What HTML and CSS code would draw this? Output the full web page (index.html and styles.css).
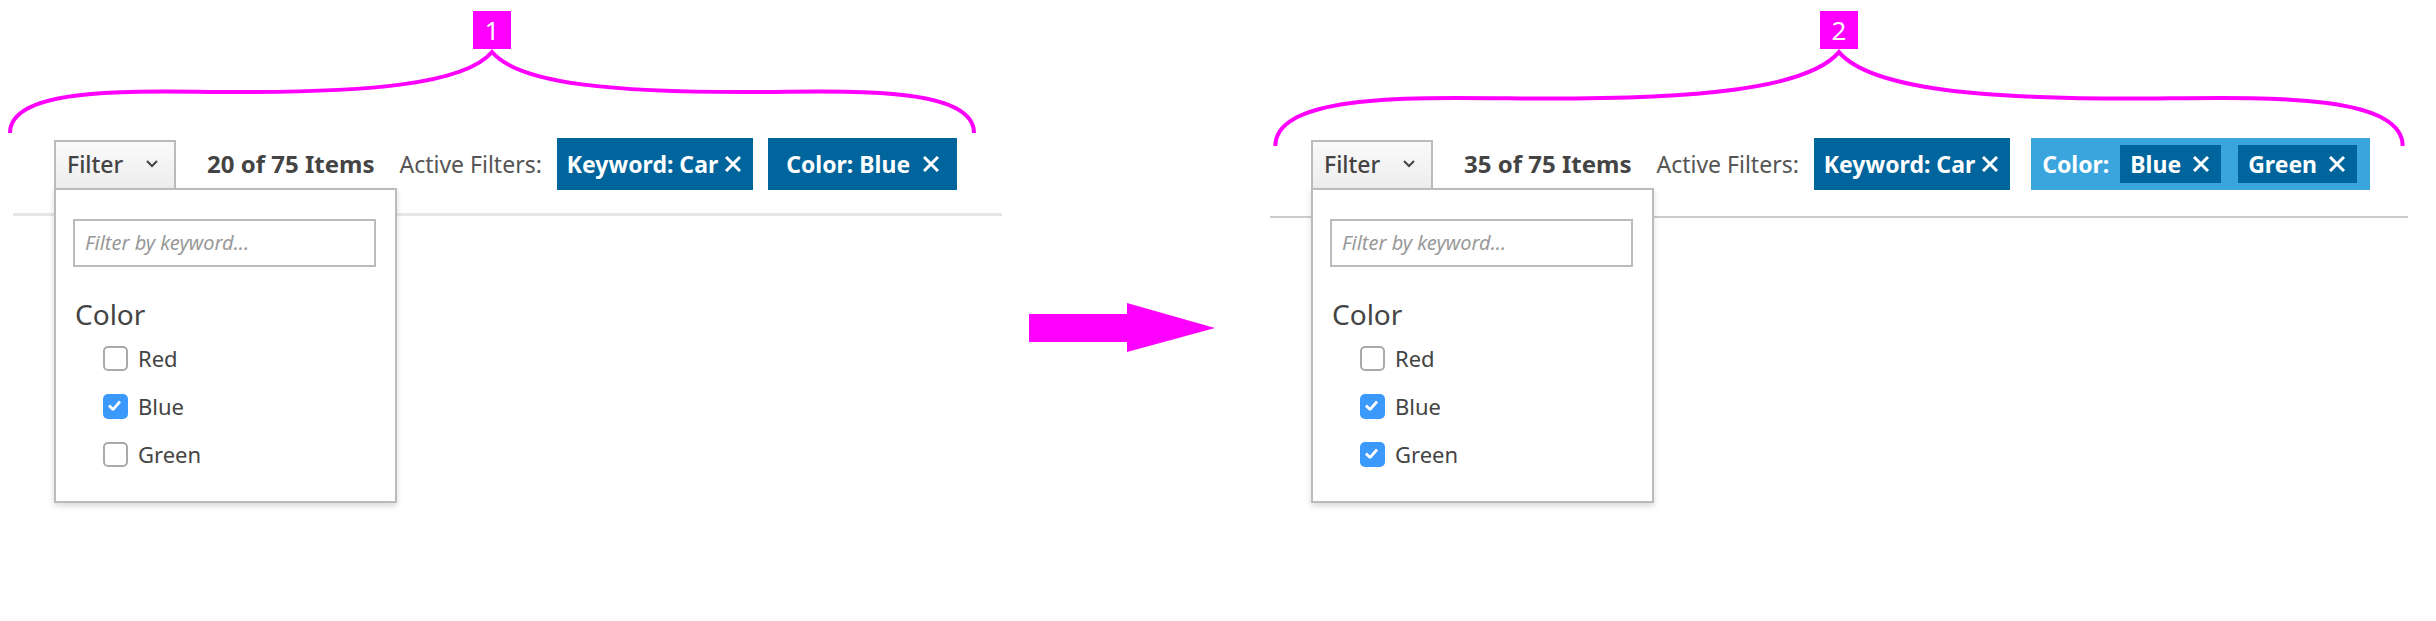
FILE: index.html
```html
<!DOCTYPE html>
<html lang="en">
<head>
<meta charset="utf-8">
<meta name="viewport" content="width=device-width, initial-scale=1">
<title>Filter states</title>
<link rel="stylesheet" href="styles.css">
</head>
<body>
<main class="comparison">
  <section class="scene scene-single" aria-label="State 1">
    <div class="callout">
      <span class="callout-number">1</span>
      <svg class="brace" viewBox="0 0 968 82" preserveAspectRatio="none" aria-hidden="true">
        <path d="M2 82C2 37 117 40 212 41C362 42 457 33 484 1C511 33 606 42 756 41C851 40 966 37 966 82"/>
      </svg>
    </div>
    <div class="toolbar">
      <div class="filter">
        <button class="filter-button" type="button" aria-expanded="true">Filter
          <svg class="chevron" viewBox="0 0 12 8" aria-hidden="true"><path d="M1 1L6 6L11 1"/></svg>
        </button>
        <div class="menu">
          <input class="keyword" type="text" placeholder="Filter by keyword..." aria-label="Filter by keyword">
          <fieldset class="options">
            <legend class="options-title">Color</legend>
            <label class="option"><input class="tick" type="checkbox">Red</label>
            <label class="option"><input class="tick" type="checkbox" checked>Blue</label>
            <label class="option"><input class="tick" type="checkbox">Green</label>
          </fieldset>
        </div>
      </div>
      <strong class="count">20 of 75 Items</strong>
      <span class="active-label">Active Filters:</span>
      <div class="tags">
        <span class="tag">Keyword: Car
          <button class="remove" type="button" aria-label="Remove Keyword: Car"><svg class="cross" viewBox="0 0 16 16" aria-hidden="true"><path d="M1 1L15 15M15 1L1 15"/></svg></button>
        </span>
        <span class="tag tag-wide">Color: Blue
          <button class="remove" type="button" aria-label="Remove Color: Blue"><svg class="cross" viewBox="0 0 16 16" aria-hidden="true"><path d="M1 1L15 15M15 1L1 15"/></svg></button>
        </span>
      </div>
    </div>
  </section>

  <div class="transition">
    <svg class="arrow" viewBox="0 0 186 50" aria-hidden="true"><path d="M0 11H98V0L186 25L98 49V39H0Z"/></svg>
  </div>

  <section class="scene scene-grouped" aria-label="State 2">
    <div class="callout">
      <span class="callout-number">2</span>
      <svg class="brace" viewBox="0 0 968 82" preserveAspectRatio="none" aria-hidden="true">
        <path d="M2 82C2 37 117 40 212 41C362 42 457 33 484 1C511 33 606 42 756 41C851 40 966 37 966 82"/>
      </svg>
    </div>
    <div class="toolbar">
      <div class="filter">
        <button class="filter-button" type="button" aria-expanded="true">Filter
          <svg class="chevron" viewBox="0 0 12 8" aria-hidden="true"><path d="M1 1L6 6L11 1"/></svg>
        </button>
        <div class="menu">
          <input class="keyword" type="text" placeholder="Filter by keyword..." aria-label="Filter by keyword">
          <fieldset class="options">
            <legend class="options-title">Color</legend>
            <label class="option"><input class="tick" type="checkbox">Red</label>
            <label class="option"><input class="tick" type="checkbox" checked>Blue</label>
            <label class="option"><input class="tick" type="checkbox" checked>Green</label>
          </fieldset>
        </div>
      </div>
      <strong class="count">35 of 75 Items</strong>
      <span class="active-label">Active Filters:</span>
      <div class="tags">
        <span class="tag">Keyword: Car
          <button class="remove" type="button" aria-label="Remove Keyword: Car"><svg class="cross" viewBox="0 0 16 16" aria-hidden="true"><path d="M1 1L15 15M15 1L1 15"/></svg></button>
        </span>
        <div class="tag-group">Color:
          <span class="tag tag-small">Blue
            <button class="remove" type="button" aria-label="Remove Blue"><svg class="cross" viewBox="0 0 16 16" aria-hidden="true"><path d="M1 1L15 15M15 1L1 15"/></svg></button>
          </span>
          <span class="tag tag-small">Green
            <button class="remove" type="button" aria-label="Remove Green"><svg class="cross" viewBox="0 0 16 16" aria-hidden="true"><path d="M1 1L15 15M15 1L1 15"/></svg></button>
          </span>
        </div>
      </div>
    </div>
  </section>
</main>
</body>
</html>
```
FILE: styles.css
```css
* {
  box-sizing: border-box;
}

body {
  margin: 0;
  background: #fff;
  color: #444;
  font: 22px/30px "Noto Sans", "Open Sans", sans-serif;
}

button,
input {
  font: inherit;
  color: inherit;
}

.comparison {
  display: grid;
  grid-template-columns: 994fr 268fr 1138fr;
  align-items: start;
  min-height: 100vh;
  padding: 11px 28px 0 8px;
}

/* Numbered callout with its brace */
.callout {
  display: flex;
  flex-direction: column;
  align-items: center;
  gap: 2px;
  height: 127px;
}

.scene-single .callout {
  padding-right: 26px;
}

.scene-grouped .callout {
  padding: 0 3px;
}

.callout-number {
  width: 38px;
  background: #f0f;
  color: #fff;
  font-size: 26px;
  line-height: 38px;
  text-align: center;
}

.brace {
  flex: none;
  width: 100%;
  height: 82px;
  overflow: visible;
  fill: none;
  stroke: #f0f;
  stroke-width: 4px;
}

.brace path {
  vector-effect: non-scaling-stroke;
}

.scene-grouped .brace {
  height: 95px;
}

/* Arrow between the two states */
.transition {
  padding: 292px 55px 0 27px;
}

.arrow {
  display: block;
  width: 100%;
  fill: #f0f;
}

/* Toolbar */
.toolbar {
  display: flex;
  align-items: center;
  padding: 0 0 23px 41px;
  border-bottom: 3px solid #e6e6e6;
  font-size: 23px;
}

.scene-single .toolbar {
  margin-left: 5px;
}

.scene-grouped .toolbar {
  padding-bottom: 26px;
  border-bottom: 2px solid #ccc;
}

.filter {
  position: relative;
  align-self: flex-end;
}

.filter-button {
  display: flex;
  align-items: center;
  justify-content: space-between;
  width: 122px;
  height: 50px;
  padding: 0 16px 3px 11px;
  border: 2px solid #bbb;
  background: linear-gradient(#fafafa, #ededed);
  font-weight: 500;
}

.chevron {
  width: 12px;
  height: 8px;
  fill: none;
  stroke: #444;
  stroke-width: 2px;
}

.count {
  margin-left: 31px;
  font-size: 24px;
}

.active-label {
  margin-left: 25px;
  color: #555;
}

.tags {
  display: flex;
  gap: 15px;
  margin-left: 15px;
}

.scene-grouped .tags {
  gap: 21px;
}

.tag,
.tag-group {
  display: flex;
  align-items: center;
  height: 52px;
  color: #fff;
  font-weight: 700;
}

.tag {
  gap: 7px;
  padding: 0 12px 0 10px;
  background: #00659c;
}

.tag-wide {
  gap: 13px;
  padding: 0 18px;
}

.tag-group {
  gap: 11px;
  padding: 0 13px 0 11px;
  background: #39a5dc;
}

.tag-small {
  gap: 12px;
  height: 38px;
}

.tag-small + .tag-small {
  margin-left: 6px;
}

.remove {
  display: flex;
  padding: 0;
  border: 0;
  background: none;
}

.cross {
  width: 16px;
  height: 16px;
  fill: none;
  stroke: #fff;
  stroke-width: 3px;
}

/* Open filter menu */
.menu {
  position: absolute;
  top: 100%;
  left: 0;
  z-index: 1;
  width: 343px;
  margin-top: -2px;
  padding: 29px 19px 23px 17px;
  border: 2px solid #bbb;
  background: #fff;
  box-shadow: 0 3px 6px rgba(0, 0, 0, 0.15);
  font-size: 22px;
}

.keyword {
  display: block;
  width: 100%;
  height: 48px;
  padding: 0 10px 2px;
  border: 2px solid #bbb;
  background: #fff;
  font-size: 20px;
  font-style: italic;
}

.keyword::placeholder {
  color: #999;
  opacity: 1;
}

.options {
  margin: 27px 0 0;
  padding: 0 0 0 30px;
  border: 0;
}

.options-title {
  margin-left: -28px;
  padding: 0;
  font-size: 28px;
  line-height: 40px;
}

.option {
  display: flex;
  align-items: center;
  gap: 10px;
  height: 48px;
}

.tick {
  flex: none;
  width: 25px;
  height: 25px;
  margin: 0;
  border: 2px solid #aaa;
  border-radius: 5px;
  background: #fff;
  appearance: none;
}

.tick:checked {
  border: 0;
  background: #3b99fc;
}

.tick:checked::before {
  content: "";
  display: block;
  height: 100%;
  background: #fff;
  clip-path: polygon(5px 13px, 7px 11px, 10px 14px, 16px 7px, 18px 9px, 11px 17px, 9px 17px);
}
```
